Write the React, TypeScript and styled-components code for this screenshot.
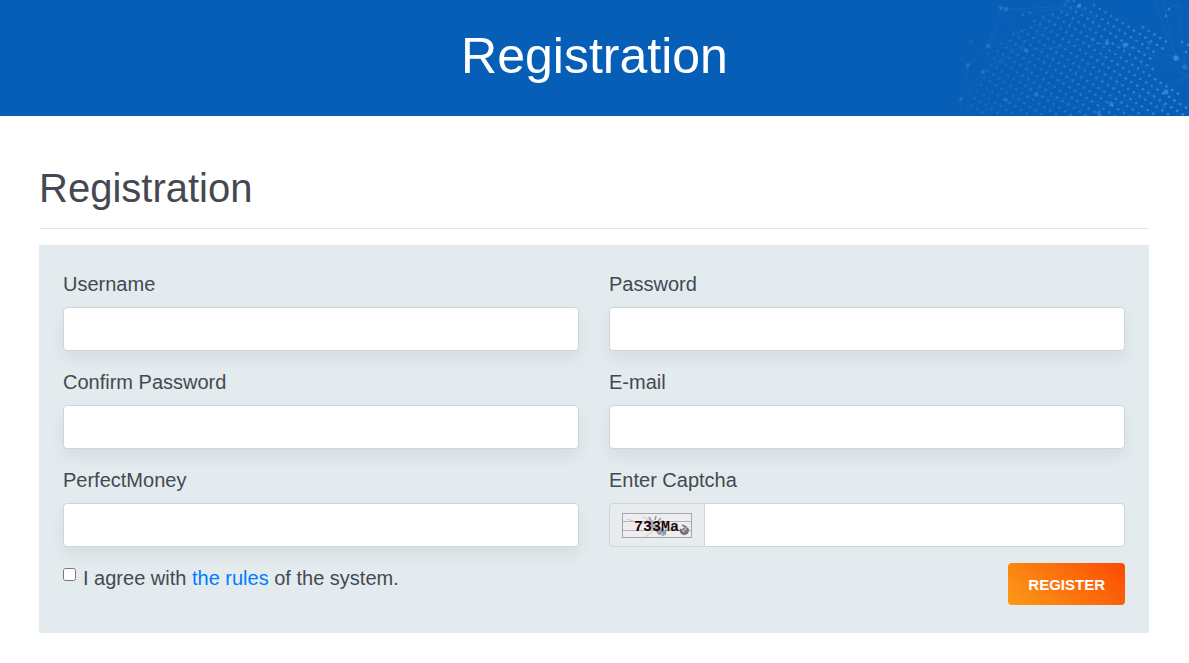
import React from 'react';
import styled, { createGlobalStyle } from 'styled-components';

const GlobalStyle = createGlobalStyle`
  *, *::before, *::after { box-sizing: border-box; }
  body {
    margin: 0;
    background: #fff;
    color: #444951;
    font-family: "Liberation Sans", Arial, sans-serif;
    font-size: 20px;
    line-height: 30px;
  }
`;

const Banner = styled.header`
  position: relative;
  overflow: hidden;
  padding: 26px 16px 30px;
  background: #065eb7;
  color: #fff;
  text-align: center;
`;

const BannerTitle = styled.h1`
  position: relative;
  margin: 0;
  font-size: 50px;
  font-weight: 400;
  line-height: 60px;
`;

const BannerArt = styled.svg`
  position: absolute;
  top: 0;
  right: 0;
`;

const Container = styled.main`
  max-width: 1141px;
  margin: 0 auto;
  padding: 48px 16px 30px 15px;
`;

const SectionTitle = styled.h2`
  margin: 0;
  padding-bottom: 16px;
  border-bottom: 1px solid #e5e5e5;
  font-size: 40px;
  font-weight: 400;
  line-height: 48px;
`;

const Form = styled.form`
  display: grid;
  grid-template-columns: 1fr 1fr;
  gap: 16px 30px;
  margin-top: 16px;
  padding: 24px 24px 28px;
  background: #e3ebee;
`;

const Field = styled.div`
  display: flex;
  flex-direction: column;
  gap: 8px;
`;

const TextInput = styled.input<{ $grouped?: boolean }>`
  flex: 1 1 auto;
  width: 100%;
  min-width: 0;
  height: 44px;
  padding: 6px 12px;
  border: 1px solid #ced4da;
  border-radius: ${p => (p.$grouped ? '0 4px 4px 0' : '4px')};
  background: #fff;
  color: #495057;
  font: inherit;
  box-shadow: ${p => (p.$grouped ? 'none' : '0 8px 16px rgba(0, 0, 0, 0.06)')};
`;

const InputGroup = styled.div`
  display: flex;
`;

const CaptchaBox = styled.div`
  display: flex;
  align-items: center;
  padding: 0 12px;
  border: 1px solid #ced4da;
  border-right: 0;
  border-radius: 4px 0 0 4px;
  background: #e9ecef;
`;

const Agreement = styled.div`
  display: flex;
  align-items: flex-start;
  gap: 7px;
`;

const Checkbox = styled.input`
  width: 13px;
  height: 13px;
  margin: 5px 0 0;
`;

const RulesLink = styled.a`
  color: #007bff;
  text-decoration: none;
`;

const SubmitButton = styled.button`
  justify-self: end;
  height: 42px;
  padding: 0 20px;
  border: 0;
  border-radius: 4px;
  background: linear-gradient(45deg, #fb9a18, #fb4b02);
  color: #fff;
  font-family: inherit;
  font-size: 15px;
  font-weight: 700;
  text-transform: uppercase;
`;

type Point = [number, number];

const halftoneOutline: Point[] = [
  [122, 12], [134, 4], [146, 0], [166, 3], [186, 17], [204, 25], [213, 27], [238, 41],
  [228, 56], [224, 65], [227, 73], [240, 84], [252, 98], [260, 108], [260, 118],
  [38, 118], [42, 96], [52, 72], [60, 50], [80, 33],
];

const inside = (x: number, y: number) => {
  let hit = false;
  halftoneOutline.forEach(([ax, ay], i) => {
    const [bx, by] = halftoneOutline[(i + halftoneOutline.length - 1) % halftoneOutline.length];
    if (ay > y !== by > y && x < ((bx - ax) * (y - ay)) / (by - ay) + ax) hit = !hit;
  });
  return hit;
};

const halftoneDots: Point[] = [];
for (let i = -45; i <= 25; i += 1) {
  for (let j = -25; j <= 35; j += 1) {
    const x = 217 + i * 5.7 - j * 3.3;
    const y = 65.3 + i * 3.6 + j * 6.8;
    if (inside(x, y)) halftoneDots.push([x, y]);
  }
}

const strayDots: Point[] = [
  [93, 15], [100, 13], [236, 16], [239, 9], [252, 42], [256, 52], [258, 45],
];

const nodes: [number, number, number, number][] = [
  [71, 8, 2.2, 0.25], [76, 9, 2.2, 0.25], [149, 6, 2.2, 0.3], [58, 46, 2.2, 0.22],
  [38, 65, 2.2, 0.2], [53, 72, 2.2, 0.2], [31, 99, 2.2, 0.18], [96, 50, 2.2, 0.2],
  [177, 43, 2.4, 0.3], [195, 45, 2.4, 0.38], [246, 58, 2.7, 0.45], [255, 67, 2.7, 0.2],
  [236, 92, 2.4, 0.4], [181, 104, 2.4, 0.25], [169, 113, 2.4, 0.22], [106, 95, 2.2, 0.2],
  [76, 100, 2.2, 0.2], [41, 41, 2, 0.1], [138, 1, 2.2, 0.16], [219, 43, 2.4, 0.16],
  [234, 106, 2.2, 0.16], [163, 39, 2.2, 0.14],
];

const BannerPattern = () => (
  <BannerArt width="259" height="116" viewBox="0 0 259 116" aria-hidden="true">
    <g fill="#7cb3ee">
      {halftoneDots.map(([x, y], i) => (
        <circle key={i} cx={x} cy={y} r="1.4" opacity={0.14 + Math.max(0, x - 60) / 700} />
      ))}
      {strayDots.map(([x, y], i) => (
        <circle key={i} cx={x} cy={y} r="1.4" opacity={0.12 + x / 900} />
      ))}
      {nodes.map(([x, y, r, o], i) => (
        <circle key={i} cx={x} cy={y} r={r} opacity={o} />
      ))}
    </g>
    <g fill="none" stroke="#7cb3ee" strokeWidth="0.7" opacity="0.11">
      <path d="M71 8 58 46 76 9 149 6 101 12 76 9 96 50 177 43 149 6 195 45 236 92 M58 46 38 65 38 116 M38 65 31 99 31 116 M58 46 96 50 53 72 31 99 M53 72 76 100 106 95 181 104 259 76 M58 46 106 95 40 114 M149 6 106 95 169 113 177 43 195 45 181 104 M96 50 99 95 M53 72 149 6 58 46 M106 95 195 45" />
      <path d="M177 43 259 64 M195 45 259 76 M195 45 259 70 M195 45 259 60 M246 58 224 0 259 9 M246 58 233 0 M255 67 247 0 M236 92 259 75 M236 92 181 104" />
    </g>
  </BannerArt>
);

const CaptchaImage = () => (
  <svg width="70" height="25" viewBox="0 0 70 25" role="img" aria-label="Captcha code">
    <rect x="0.5" y="0.5" width="69" height="24" fill="#eeedf0" stroke="#a5a5a8" />
    <path d="M1 8.5H69M1 17.5H69" stroke="#b4b3b6" />
    <path d="M20 4 34 9M5 6 14 9M23 24 31 18" stroke="#c9c9ce" fill="none" />
    <g fill="none" stroke="#999aa2" strokeWidth="1.5">
      <path d="M27 4 29 7M34 3 33 7M39 5 36 8M24 8 28 9M42 8 38 9" />
      <path d="M27 9 38 18 43 21" stroke="#a9acb9" strokeWidth="6" />
      <path d="M35 18 37 21 40 17 43 21 44 16" stroke="#7f96aa" />
    </g>
    <path d="M59 16A3.5 3.5 0 1 0 65 15" fill="#bcbcbd" stroke="#6f7071" strokeWidth="2.5" />
    <path d="M60 12 64 14 60 17M62 18H65" fill="none" stroke="#77797a" strokeWidth="1.5" />
    <text x="12" y="18" fill="#250608" fontFamily='"Liberation Mono", monospace' fontSize="15" fontWeight="700">733Ma</text>
  </svg>
);

const fields = [
  { id: 'username', label: 'Username', type: 'text' },
  { id: 'password', label: 'Password', type: 'password' },
  { id: 'confirm', label: 'Confirm Password', type: 'password' },
  { id: 'email', label: 'E-mail', type: 'email' },
  { id: 'perfectmoney', label: 'PerfectMoney', type: 'text' },
];

export default function App() {
  return (
    <>
      <GlobalStyle />
      <Banner>
        <BannerPattern />
        <BannerTitle>Registration</BannerTitle>
      </Banner>
      <Container>
        <SectionTitle>Registration</SectionTitle>
        <Form onSubmit={e => e.preventDefault()}>
          {fields.map(f => (
            <Field key={f.id}>
              <label htmlFor={f.id}>{f.label}</label>
              <TextInput id={f.id} name={f.id} type={f.type} />
            </Field>
          ))}
          <Field>
            <label htmlFor="captcha">Enter Captcha</label>
            <InputGroup>
              <CaptchaBox>
                <CaptchaImage />
              </CaptchaBox>
              <TextInput id="captcha" name="captcha" type="text" $grouped />
            </InputGroup>
          </Field>
          <Agreement>
            <Checkbox id="agree" name="agree" type="checkbox" />
            <label htmlFor="agree">
              I agree with <RulesLink href="#rules">the rules</RulesLink> of the system.
            </label>
          </Agreement>
          <SubmitButton type="submit">Register</SubmitButton>
        </Form>
      </Container>
    </>
  );
}
